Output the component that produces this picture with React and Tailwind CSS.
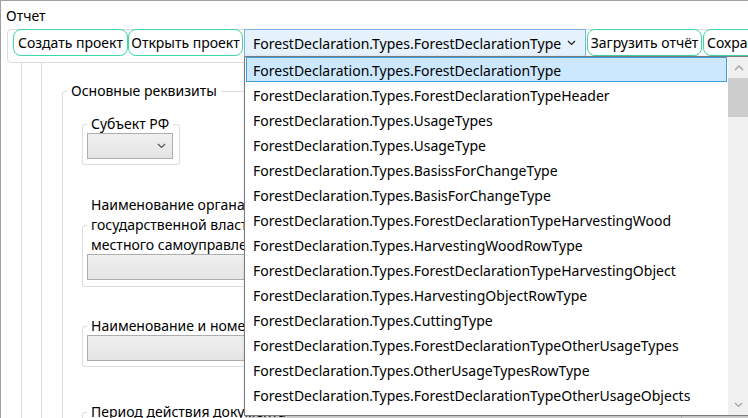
import React from "react";

const items = [
  "ForestDeclaration.Types.ForestDeclarationType",
  "ForestDeclaration.Types.ForestDeclarationTypeHeader",
  "ForestDeclaration.Types.UsageTypes",
  "ForestDeclaration.Types.UsageType",
  "ForestDeclaration.Types.BasissForChangeType",
  "ForestDeclaration.Types.BasisForChangeType",
  "ForestDeclaration.Types.ForestDeclarationTypeHarvestingWood",
  "ForestDeclaration.Types.HarvestingWoodRowType",
  "ForestDeclaration.Types.ForestDeclarationTypeHarvestingObject",
  "ForestDeclaration.Types.HarvestingObjectRowType",
  "ForestDeclaration.Types.CuttingType",
  "ForestDeclaration.Types.ForestDeclarationTypeOtherUsageTypes",
  "ForestDeclaration.Types.OtherUsageTypesRowType",
  "ForestDeclaration.Types.ForestDeclarationTypeOtherUsageObjects",
  "ForestDeclaration.Types.OtherUsageObjectsRowType",
];

function Chevron({ className = "", color = "#333" }) {
  return (
    <svg width="9" height="6" viewBox="0 0 9 6" className={className}>
      <polyline points="1,1 4.5,4.5 8,1" fill="none" stroke={color} strokeWidth="1.2" />
    </svg>
  );
}

function ChevronUp({ color = "#a0a0a0" }) {
  return (
    <svg width="10" height="6" viewBox="0 0 10 6">
      <polyline points="1,5 5,1 9,5" fill="none" stroke={color} strokeWidth="1.3" />
    </svg>
  );
}

function ToolButton({ children, className = "w-[115px] justify-center" }) {
  return (
    <div className={`shrink-0 h-[27px] rounded-[8px] border border-[#3ed8a2] bg-white flex items-center leading-[20px] whitespace-nowrap ${className}`}>
      {children}
    </div>
  );
}

function GrayBox({ className = "", chevron = false }) {
  return (
    <div
      className={`h-[26px] border border-[#adadad] bg-gradient-to-b from-[#f0f0f0] to-[#e5e5e5] flex items-center justify-end pr-[6px] ${className}`}
    >
      {chevron && <Chevron color="#555" />}
    </div>
  );
}

export default function App() {
  return (
    <div className="relative w-[748px] h-[418px] overflow-hidden bg-white border-t border-l border-[#a0a0a0] flex flex-col font-['Noto_Sans',sans-serif] text-[14px] text-black">
      {/* Title */}
      <div className="h-[28px] shrink-0 pl-[5px] pt-[3px] leading-[24px]">Отчет</div>

      {/* Toolbar */}
      <div className="shrink-0 ml-[6px] h-[34px] w-[780px] rounded-[4px] border border-[#dcdcdc] pl-[5px]">
        <div className="-mt-px flex items-start">
          <ToolButton>Создать проект</ToolButton>
          <ToolButton>Открыть проект</ToolButton>
          <div className="shrink-0 ml-[1px] w-[342px] h-[28px] border border-[#7eb4ea] bg-[#e5f1fb] flex items-center pl-[8px] pr-[9px] whitespace-nowrap">
            <span className="flex-1">ForestDeclaration.Types.ForestDeclarationType</span>
            <Chevron color="#222" />
          </div>
          <div className="ml-[1px]">
            <ToolButton>Загрузить отчёт</ToolButton>
          </div>
          <div className="ml-[1px]">
            <ToolButton className="px-[3px]">Сохранить проект</ToolButton>
          </div>
        </div>
      </div>

      {/* Body */}
      <div className="flex-1 flex pl-[20px]">
        <div className="flex-1 flex border-l border-[#d5dce4] pl-[19px]">
          <div className="flex-1 border-l border-[#d5dce4] pl-[20px]">
            <fieldset className="mt-[18px] w-[700px] border border-[#dcdcdc] rounded-[3px] p-0 m-0 min-w-0">
              <legend className="ml-[4px] px-[4px] leading-[20px]">Основные реквизиты</legend>
              <div className="pl-[19px] pt-[13px]">
                {/* Субъект РФ */}
                <fieldset className="w-[98px] border border-[#dcdcdc] rounded-[3px] p-0 m-0 min-w-0">
                  <legend className="ml-[4px] px-[4px] leading-[20px] whitespace-nowrap">Субъект РФ</legend>
                  <div className="pl-[4px] pb-[5px] -mt-px">
                    <GrayBox className="w-[86px]" chevron />
                  </div>
                </fieldset>

                <fieldset className="mt-[30px] w-[600px] border border-[#dcdcdc] rounded-[3px] p-0 m-0 min-w-0">
                  <legend className="ml-[4px] px-[4px] leading-[20px] whitespace-nowrap">
                    Наименование органа
                    <br />
                    государственной власти или органа
                    <br />
                    местного самоуправления
                  </legend>
                  <div className="pl-[4px] pr-[4px] pb-[6px] -mt-px">
                    <GrayBox className="w-full" />
                  </div>
                </fieldset>

                <fieldset className="mt-[29px] w-[600px] border border-[#dcdcdc] rounded-[3px] p-0 m-0 min-w-0">
                  <legend className="ml-[4px] px-[4px] leading-[20px] whitespace-nowrap">
                    Наименование и номер документа
                  </legend>
                  <div className="pl-[4px] pr-[4px] pb-[5px] -mt-px">
                    <GrayBox className="w-full" />
                  </div>
                </fieldset>

                <fieldset className="mt-[35px] w-[600px] border border-[#dcdcdc] rounded-[3px] p-0 m-0 min-w-0">
                  <legend className="ml-[4px] px-[4px] leading-[20px] whitespace-nowrap">
                    Период действия документа
                  </legend>
                  <div className="pl-[4px] pr-[4px] pb-[5px]">
                    <GrayBox className="w-full" />
                  </div>
                </fieldset>
              </div>
            </fieldset>
          </div>
        </div>
      </div>

      {/* Dropdown popup */}
      <div className="absolute left-[243px] top-[55px] w-[506px] h-[360px] border border-[#7a7a7a] bg-white flex shadow-[2px_2px_4px_rgba(0,0,0,0.3)]">
        <div className="flex-1 overflow-hidden px-[1px]">
          {items.map((t, i) => (
            <div
              key={i}
              className={
                i === 0
                  ? "h-[25px] overflow-hidden border border-[#3d9ee3] bg-[#cce8ff] pl-[6px] pt-[2px] leading-[21px] whitespace-nowrap"
                  : "h-[25px] overflow-hidden border border-transparent pl-[6px] pt-[2px] leading-[21px] whitespace-nowrap"
              }
            >
              {t}
            </div>
          ))}
        </div>
        <div className="w-[21px] shrink-0 bg-[#f0f0f0] flex flex-col">
          <div className="h-[21px] flex items-center justify-center">
            <ChevronUp />
          </div>
          <div className="h-[39px] bg-[#cdcdcd]" />
          <div className="flex-1" />
          <div className="h-[21px] flex items-center justify-center">
            <Chevron color="#a0a0a0" />
          </div>
        </div>
      </div>
    </div>
  );
}
